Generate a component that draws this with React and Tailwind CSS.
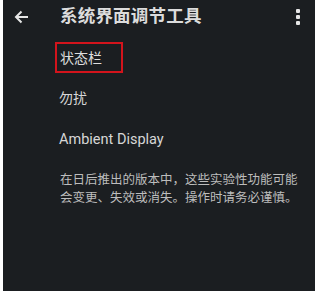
export default function App() {
  return (
    <div className="w-[317px] h-[292px] bg-white pl-[3px] pr-[2px] pb-[1px]">
      <div
        className="w-full h-full bg-[#1b1e21] flex flex-col"
        style={{ fontFamily: 'Roboto, "Noto Sans CJK SC", sans-serif' }}
      >
        {/* Toolbar */}
        <div className="h-[34px] flex items-center relative">
          <div className="w-[57px] flex items-center pl-[11px]">
            <svg width="15" height="14" viewBox="0 0 15 14" fill="none">
              <path d="M14 7H2.5M7.5 1.5L2 7l5.5 5.5" stroke="#e6e6e6" strokeWidth="2" />
            </svg>
          </div>
          <div className="text-[17.5px] font-bold text-[#dcdcdc] tracking-[0.2px] leading-none">
            系统界面调节工具
          </div>
          <div className="ml-auto mr-[15px] flex flex-col gap-[2px]">
            <span className="block w-[4px] h-[4px] rounded-[1px] bg-[#e6e6e6]" />
            <span className="block w-[4px] h-[4px] rounded-[1px] bg-[#e6e6e6]" />
            <span className="block w-[4px] h-[4px] rounded-[1px] bg-[#e6e6e6]" />
          </div>
        </div>

        {/* List */}
        <div className="pl-[52px] flex flex-col">
          <div className="mt-[8px] w-[68px] h-[31px] border-2 border-[#d3141c] flex items-center pl-[3px]">
            <span className="text-[14px] text-[#dedede] leading-none">状态栏</span>
          </div>
          <div className="h-[42px] flex items-center pl-[4px] mt-[4px]">
            <span className="text-[14px] text-[#d6d6d6] leading-none">勿扰</span>
          </div>
          <div className="h-[42px] flex items-center pl-[4px]">
            <span className="text-[14.5px] text-[#d6d6d6] leading-none">Ambient Display</span>
          </div>
          <div className="pl-[5px] mt-[10px] w-[252px] text-[12.5px] leading-[18px] text-[#bdbdbd]">
            在日后推出的版本中，这些实验性功能可能会变更、失效或消失。操作时请务必谨慎。
          </div>
        </div>
      </div>
    </div>
  );
}
